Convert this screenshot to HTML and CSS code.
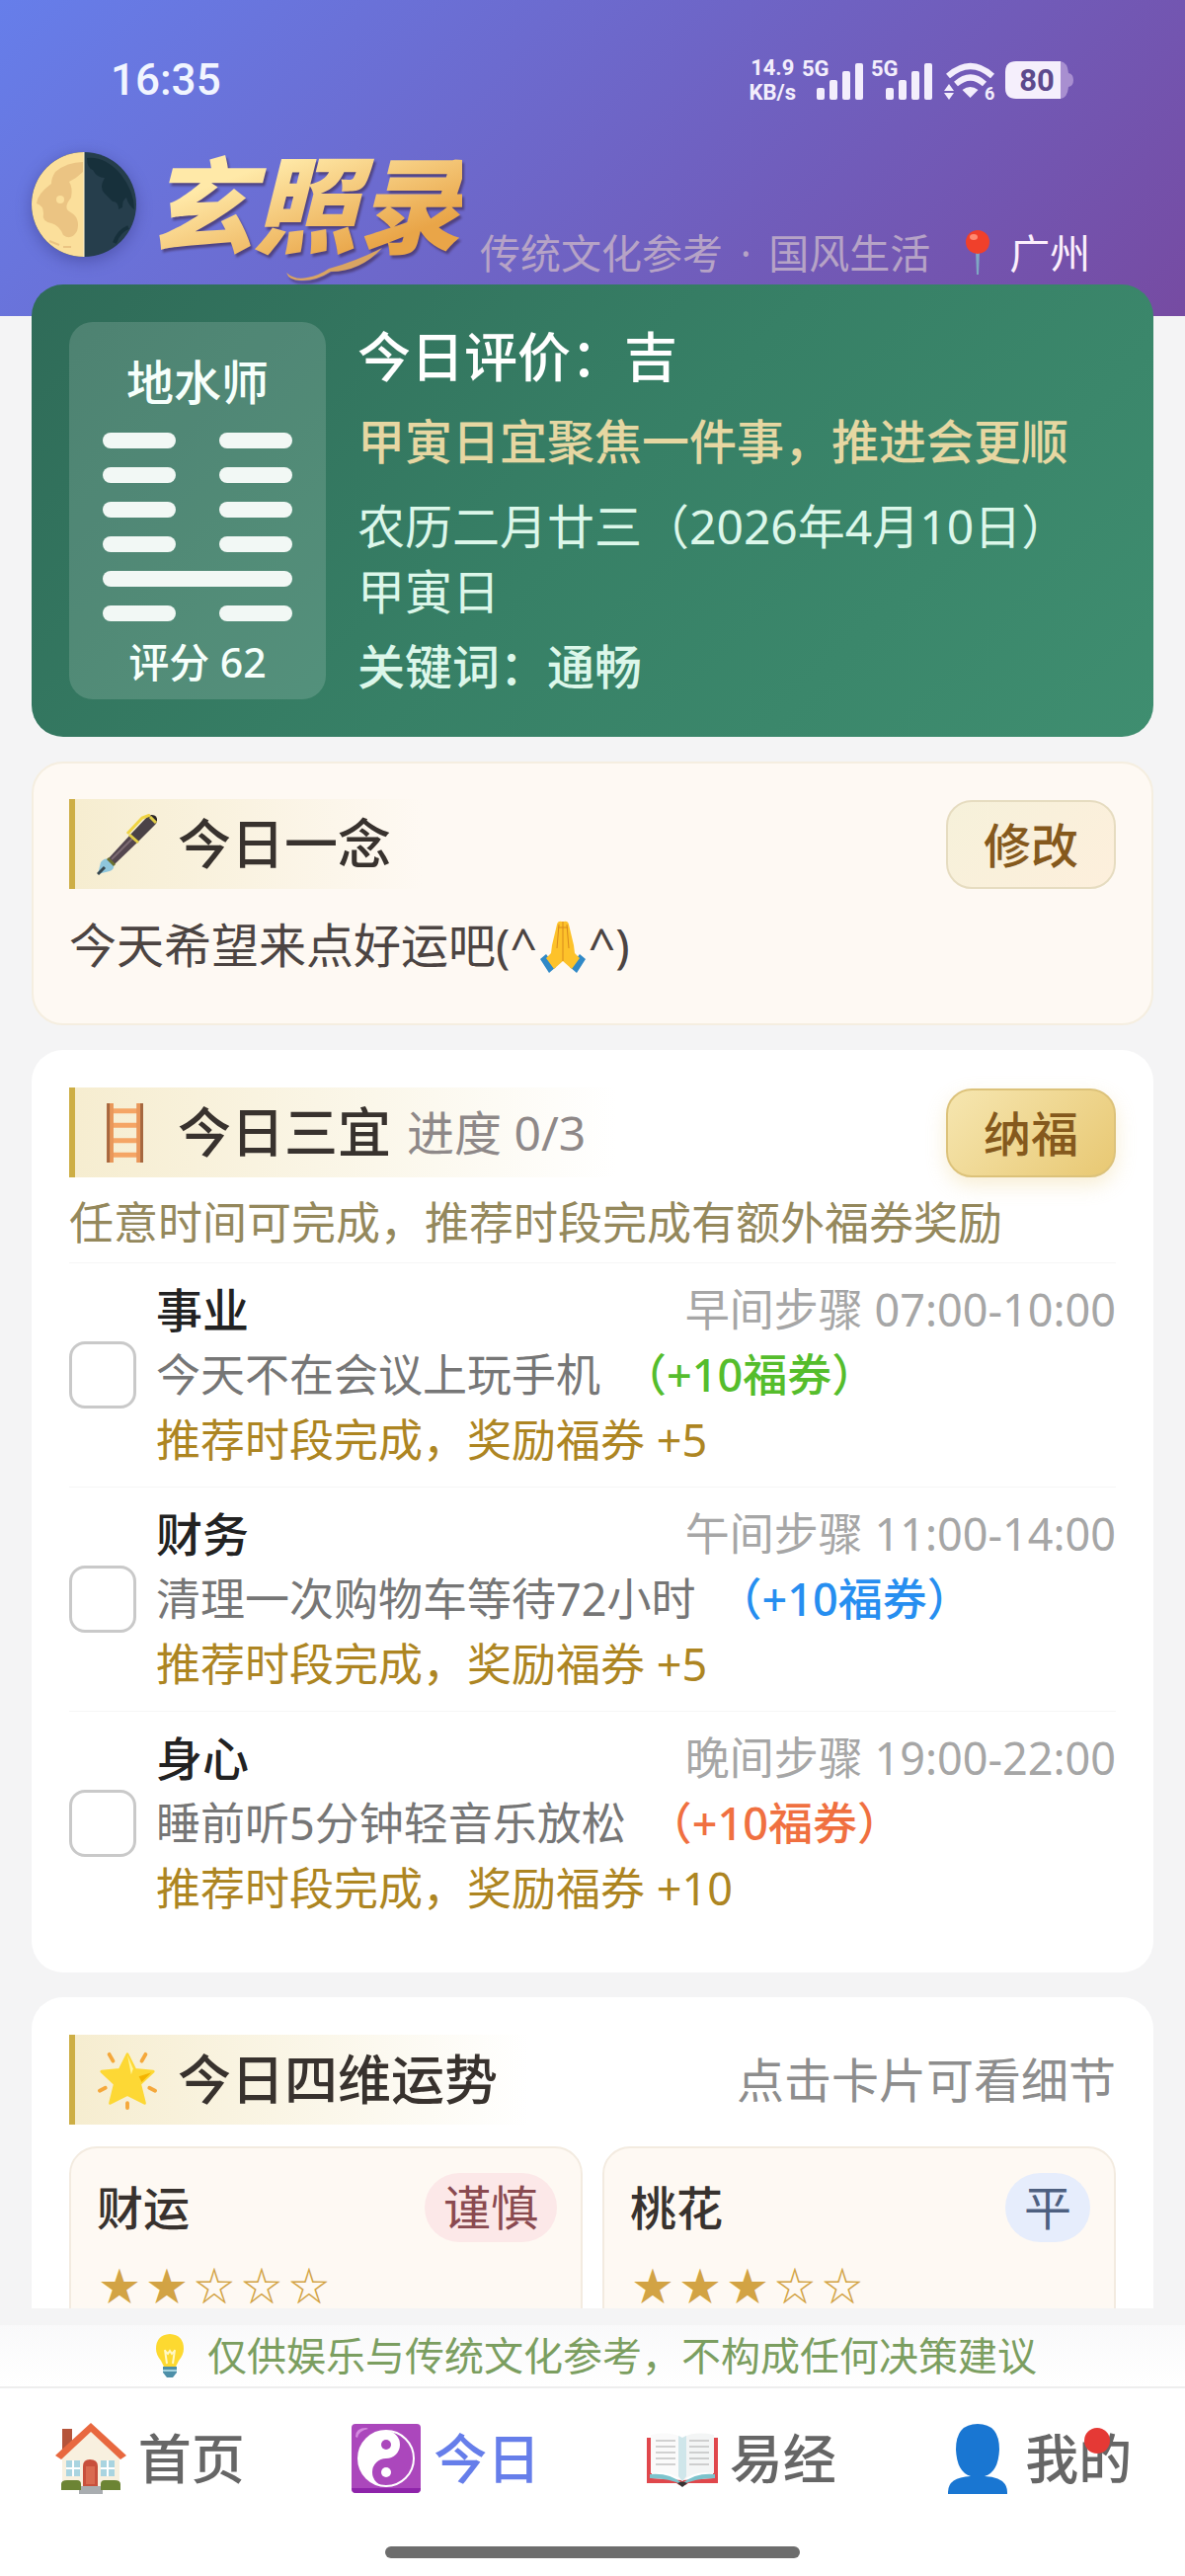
FILE: index.html
```
<!DOCTYPE html>
<html lang="zh-CN">
<head>
  <meta charset="UTF-8">
  <meta name="viewport" content="width=device-width, initial-scale=1.0">
  <title>玄照录</title>
  <link rel="stylesheet" href="styles.css">
</head>
<body>
  <div class="page">
    <header class="header">
      <div class="status-bar">
        <span class="time">16:35</span>
        <div class="status-icons">
          <span class="speed">14.9<br>KB/s</span>
          <svg class="signal" viewBox="-4 -6 70 54" fill="#f3eefc">
            <text x="0" y="17">5G</text>
            <rect x="15" y="29" width="8" height="12" rx="2"/>
            <rect x="28" y="21" width="8" height="20" rx="2"/>
            <rect x="41" y="12" width="8" height="29" rx="2"/>
            <rect x="54" y="4" width="8" height="37" rx="2"/>
          </svg>
          <svg class="signal" viewBox="-4 -6 70 54" fill="#f3eefc">
            <text x="0" y="17">5G</text>
            <rect x="15" y="29" width="8" height="12" rx="2"/>
            <rect x="28" y="21" width="8" height="20" rx="2"/>
            <rect x="41" y="12" width="8" height="29" rx="2"/>
            <rect x="54" y="4" width="8" height="37" rx="2"/>
          </svg>
          <svg class="wifi" viewBox="-4 -6 60 54" fill="none" stroke="#f3eefc" stroke-width="6">
            <path d="M4 17 Q27 -3 49 17"/>
            <path d="M12 25 Q27 12 41 25"/>
            <path d="M26.500 39 L18.500 31 Q26.500 25 34.500 31 Z" fill="#f3eefc" stroke="none"/>
            <path d="M5 25 L10 32 H0 Z M5 41 L10 34 H0 Z" fill="#f3eefc" stroke="none"/>
            <text x="41" y="41" fill="#f3eefc" stroke="none">6</text>
          </svg>
          <svg class="battery" viewBox="0 -8 70 54">
            <path d="M54 0 H56 Q63 1 64 12 Q69 13 69 19 Q69 25 64 26 Q63 37 56 38 H54 Z" fill="#a88fd0"/>
            <path d="M11 0 H56 V38 H11 Q0 38 0 27 V11 Q0 0 11 0 Z" fill="#f5effc"/>
            <text x="32" y="30" text-anchor="middle" fill="#5d4a8c">80</text>
          </svg>
        </div>
      </div>
      <div class="brand">
        <svg class="moon" viewBox="0 0 106 106">
          <circle cx="53" cy="53" r="53" fill="#263e4c"/>
          <path d="M53 0 A53 53 0 0 0 53 106 Z" fill="#fbdf9b"/>
          <path d="M52 10 Q36 10 24 20 Q20 26 20 32 Q6 42 5 52 Q12 54 12 62 Q10 70 20 72 Q28 74 32 84 Q40 90 46 80 Q50 66 38 60 Q32 56 40 46 Q42 36 38 30 Q46 26 52 20 Z" fill="#ebc483"/>
          <circle cx="29" cy="48" r="4" fill="#fbdf9b"/>
          <path d="M18 90 L28 94 M32 96 H40" stroke="#ebc483" stroke-width="2"/>
          <path d="M56 6 Q74 4 90 22 Q104 40 104 58 Q98 54 96 46 Q92 48 92 56 L88 58 Q88 50 82 50 Q78 46 74 42 Q68 36 74 26 Q66 26 62 18 Q56 16 56 6 Z" fill="#17303b"/>
          <path d="M84 92 Q88 80 98 76" stroke="#17303b" stroke-width="4" fill="none"/>
          <path d="M53 0 V106" stroke="#fff3cf" stroke-width="1"/>
        </svg>
        <h1 class="logo">玄照录
          <svg class="swash" viewBox="0 0 100 34" aria-hidden="true">
            <path d="M1 25 Q10 33 22 30 Q34 28 44 21 Q70 14 98 0 Q76 24 46 24 Q32 33 18 33 Q4 34 1 25 Z" fill="#d9a463"/>
          </svg>
        </h1>
        <p class="slogan">传统文化参考 <span>·</span> 国风生活</p>
        <p class="city">
          <svg class="pin" viewBox="0 0 24 46">
            <path d="M10 20 H14 L13 45 H11 Z" fill="#7fa7c4"/>
            <circle cx="12" cy="12" r="12" fill="#f0402b"/>
            <ellipse cx="8" cy="7" rx="4" ry="3" fill="#ff8a70"/>
          </svg>
          广州
        </p>
      </div>
    </header>

    <main class="cards">
      <section class="summary">
        <div class="hexagram">
          <h2>地水师</h2>
          <div class="lines">
            <div class="line"><i></i><i></i></div>
            <div class="line"><i></i><i></i></div>
            <div class="line"><i></i><i></i></div>
            <div class="line"><i></i><i></i></div>
            <div class="line"><i></i></div>
            <div class="line"><i></i><i></i></div>
          </div>
          <p>评分 62</p>
        </div>
        <div class="summary-text">
          <p class="rating">今日评价：吉</p>
          <p class="advice">甲寅日宜聚焦一件事，推进会更顺</p>
          <p class="date">农历二月廿三（2026年4月10日） <span>甲寅日</span></p>
          <p class="keyword">关键词：通畅</p>
        </div>
      </section>

      <section class="card card-warm">
        <div class="card-head">
          <h2 class="card-title">
            <svg class="emoji" viewBox="0 0 62 62">
              <path d="M1 61 L4 49 Q8 44 11 46 L17 52 Q18 56 13 58 Z" fill="#8fc6dc"/>
              <path d="M1 61 L8 54" stroke="#37474f" stroke-width="3"/>
              <path d="M11 46 L34 21 L42 28 L17 52 Z" fill="#54464f"/>
              <path d="M15 46 L37 24" stroke="#7d6b74" stroke-width="2"/>
              <path d="M34 21 L51 3 Q56 0 60 4 Q62 8 59 11 L42 28 Z" fill="#4a4247"/>
              <path d="M54 1 Q62 0 61 8 Z" fill="#2b2527"/>
              <path d="M11 45 L18 52" stroke="#6b7030" stroke-width="3"/>
              <path d="M33 21 L42 29" stroke="#e3cf46" stroke-width="3"/>
              <path d="M54 3 L60 9" stroke="#e3cf46" stroke-width="3"/>
              <path d="M31 20 L46 4 L54 1" stroke="#f0d443" stroke-width="3" fill="none"/>
            </svg>
            今日一念
          </h2>
          <button type="button" class="btn">修改</button>
        </div>
        <p class="wish">今天希望来点好运吧(^<svg class="hands" viewBox="0 0 46 54">
            <path d="M0 39 L6 34 L16 47 L9 53 Z M46 39 L40 34 L30 47 L37 53 Z" fill="#3089c7"/>
            <path d="M22 1 Q18 0 17 4 L12 25 L11 33 L6 38 L14 49 L23 41 L32 49 L40 38 L35 33 L34 25 L29 4 Q28 0 24 1 Z" fill="#fdc22a"/>
            <path d="M23 1 V41 M19 4 L17 28 M27 4 L29 28" stroke="#d98a1c" stroke-width="1" fill="none"/>
            <path d="M18 7 H28" stroke="#d98a1c" stroke-width="1"/>
          </svg>^)</p>
      </section>

      <section class="card">
        <div class="card-head">
          <h2 class="card-title">
            <svg class="emoji" viewBox="0 0 64 64">
              <path d="M16 9 H44 M16 24 H44 M16 40 H44 M16 55 H44" stroke="#f5a565" stroke-width="5"/>
              <path d="M14 1 V63 M45 1 V63" stroke="#e9975a" stroke-width="7"/>
              <path d="M12 1 V63 M47 1 V63" stroke="#a5673f" stroke-width="3"/>
            </svg>
            今日三宜
            <span class="progress">进度 0/3</span>
          </h2>
          <button type="button" class="btn btn-gold">纳福</button>
        </div>
        <p class="hint">任意时间可完成，推荐时段完成有额外福券奖励</p>
        <ul class="tasks">
          <li class="task">
            <input type="checkbox" id="task-career">
            <div class="task-body">
              <div class="task-top"><label for="task-career">事业</label><span class="task-time">早间步骤 07:00-10:00</span></div>
              <p class="task-desc">今天不在会议上玩手机<b class="green">（+10福券）</b></p>
              <p class="task-bonus">推荐时段完成，奖励福券 +5</p>
            </div>
          </li>
          <li class="task">
            <input type="checkbox" id="task-money">
            <div class="task-body">
              <div class="task-top"><label for="task-money">财务</label><span class="task-time">午间步骤 11:00-14:00</span></div>
              <p class="task-desc">清理一次购物车等待72小时<b class="blue">（+10福券）</b></p>
              <p class="task-bonus">推荐时段完成，奖励福券 +5</p>
            </div>
          </li>
          <li class="task">
            <input type="checkbox" id="task-health">
            <div class="task-body">
              <div class="task-top"><label for="task-health">身心</label><span class="task-time">晚间步骤 19:00-22:00</span></div>
              <p class="task-desc">睡前听5分钟轻音乐放松<b class="orange">（+10福券）</b></p>
              <p class="task-bonus">推荐时段完成，奖励福券 +10</p>
            </div>
          </li>
        </ul>
      </section>

      <section class="card">
        <div class="card-head">
          <h2 class="card-title">
            <svg class="emoji" viewBox="0 0 64 64">
              <path d="M32 5 L40 21 L59 23 L45 36 L50 56 L32 47 L14 56 L19 36 L5 23 L24 21 Z" fill="#fdd835" stroke="#fdd835" stroke-width="3" stroke-linejoin="round"/>
              <path d="M32 6 L38 20 L36 26 Z" fill="#fff59d"/>
              <path d="M57 24 L44 28 L47 34 Z" fill="#f4b400"/>
              <path d="M13 5 L17 12 M51 5 L47 12 M3 43 L9 40 M61 43 L55 40 M32 56 V61" stroke="#f5a83b" stroke-width="4" stroke-linecap="round"/>
            </svg>
            今日四维运势
          </h2>
          <span class="card-note">点击卡片可看细节</span>
        </div>
        <div class="fortunes">
          <article class="fortune">
            <div class="fortune-top"><h3>财运</h3><span class="tag tag-red">谨慎</span></div>
            <div class="stars"><span>★</span><span>★</span><span>☆</span><span>☆</span><span>☆</span></div>
          </article>
          <article class="fortune">
            <div class="fortune-top"><h3>桃花</h3><span class="tag tag-blue">平</span></div>
            <div class="stars"><span>★</span><span>★</span><span>★</span><span>☆</span><span>☆</span></div>
          </article>
        </div>
      </section>
    </main>
  </div>

  <footer class="footer">
    <p class="disclaimer">
      <svg class="bulb" viewBox="0 0 28 44">
        <path d="M14 0 Q28 1 28 15 Q28 21 23 27 Q21 31 20 33 H8 Q7 31 5 27 Q0 21 0 15 Q0 1 14 0 Z" fill="#fdd930"/>
        <path d="M9 16 L11 30 M19 16 L17 30 M9 17 L12 20 L14 17 L16 20 L19 17" stroke="#fff8c4" stroke-width="2" fill="none"/>
        <path d="M7 33 H21 V39 L17 44 H11 L7 39 Z" fill="#4d8fa8"/>
        <path d="M7 37 H21" stroke="#a6d3e0" stroke-width="2"/>
      </svg>
      仅供娱乐与传统文化参考，不构成任何决策建议
    </p>
    <nav class="tabbar">
      <a href="#home" class="tab">
        <svg viewBox="0 0 72 72">
          <path d="M7 6 H17 V30 H7 Z" fill="#b5543a"/>
          <path d="M36 4 L65 32 V66 H7 V32 Z" fill="#f8f0df"/>
          <path d="M36 0 L72 33 L66 37 L36 9 L6 37 L0 33 Z" fill="#e8683f"/>
          <path d="M28 66 V44 Q28 37 35 37 Q43 37 43 44 V66 Z" fill="#c8503c"/>
          <path d="M31 44 H40 V62 H31 Z" fill="#d96a50"/>
          <path d="M11 38 H25 V54 H11 Z M46 38 H60 V54 H46 Z" fill="#a9d4e0"/>
          <path d="M18 38 V54 M11 46 H25 M53 38 V54 M46 46 H60" stroke="#fff" stroke-width="2"/>
          <path d="M6 68 V62 Q6 58 12 58 H22 Q26 58 26 62 V68 Z M46 68 V62 Q46 58 50 58 H60 Q66 58 66 62 V68 Z" fill="#6c8434"/>
          <path d="M26 64 H46 V68 H48 V72 H24 V68 H26 Z" fill="#a9adb0"/>
        </svg>
        首页
      </a>
      <a href="#today" class="tab active">
        <svg viewBox="0 0 72 72">
          <rect x="1" y="1" width="70" height="70" rx="4" fill="#ab47bc"/>
          <path d="M1 66 Q1 71 6 71 H66 Q71 71 71 66 Z" fill="#8e24aa"/>
          <path d="M5 14 Q5 5 16 5 L18 6 Q8 8 7 15 Z" fill="#d58be0"/>
          <circle cx="36" cy="36" r="28" fill="#ab47bc" stroke="#fff" stroke-width="2"/>
          <path d="M36 8 A28 28 0 0 0 36 64 A14 14 0 0 1 36 36 A14 14 0 0 0 36 8 Z" fill="#fff"/>
          <circle cx="36" cy="22" r="5" fill="#ab47bc"/>
          <circle cx="36" cy="50" r="5" fill="#fff"/>
        </svg>
        今日
      </a>
      <a href="#yijing" class="tab">
        <svg viewBox="0 0 72 72">
          <path d="M0 15 H5 V56 L36 58 L67 56 V15 H72 V61 H42 Q36 66 30 61 H0 Z" fill="#e0474c"/>
          <path d="M3 52 Q22 50 36 61 Q50 50 69 52 V56 Q48 56 36 63 Q24 56 3 56 Z" fill="#7cc3cc"/>
          <path d="M4 12 Q24 8 36 15 V59 Q24 48 4 51 Z" fill="#fafafa"/>
          <path d="M68 12 Q48 8 36 15 V59 Q48 48 68 51 Z" fill="#f3f5f5"/>
          <path d="M32 13 L36 15 L40 13 V54 L36 59 L32 54 Z" fill="#cfe6ea"/>
          <path d="M9 18 H29 M9 24 H29 M9 30 H29 M9 36 H29 M9 42 H29 M43 18 H63 M43 24 H63 M43 30 H63 M43 36 H63 M43 42 H63" stroke="#a8a8a8" stroke-width="1"/>
          <path d="M31 61 Q36 58 41 61 L36 65 Z" fill="#333"/>
        </svg>
        易经
      </a>
      <a href="#mine" class="tab">
        <svg viewBox="0 0 72 72">
          <path d="M36 1 Q58 1 58 27 Q57 50 43 54 Q66 55 66 70 V72 H6 V70 Q6 55 29 54 Q15 50 14 27 Q14 1 36 1 Z" fill="#1976d2"/>
        </svg>
        我的
        <span class="dot"></span>
      </a>
    </nav>
    <div class="home-indicator"></div>
  </footer>
</body>
</html>
```
FILE: styles.css
```
* {
  box-sizing: border-box;
}
body {
  font-family: "Noto Sans", "Noto Sans CJK SC", sans-serif;
  font-size: 48px;
  line-height: 66px;
  margin: 0;
  height: 100vh;
  display: flex;
  flex-direction: column;
  background-color: #f4f4f5;
  color: #38322e;
}
h1, h2, h3, p, ul {
  margin: 0;
  padding: 0;
}
svg {
  display: block;
  flex-shrink: 0;
}
.page {
  flex: 1;
  min-height: 0;
  overflow: hidden;
}

/* header */
.header {
  background: linear-gradient(135deg, #667eea 0%, #764ba2 100%);
  padding: 56px 32px 32px;
}
.status-bar {
  display: flex;
  justify-content: space-between;
  align-items: center;
  height: 50px;
  margin-bottom: 20px;
  padding: 0 80px;
}
.time {
  font-family: Roboto, sans-serif;
  font-size: 44px;
  font-weight: 500;
  line-height: 54px;
  color: #f1f5ff;
}
.status-icons {
  display: flex;
  align-items: center;
}
.speed {
  margin-right: 2px;
  font-family: Roboto, sans-serif;
  font-size: 22px;
  font-weight: 700;
  line-height: 25px;
  text-align: center;
  color: #f3eefc;
}
.signal {
  width: 70px;
  height: 54px;
}
.signal text {
  font: 700 22px Roboto, sans-serif;
}
.wifi {
  width: 60px;
  height: 54px;
  margin: 0 6px 0 4px;
}
.wifi text {
  font: 700 18px Roboto, sans-serif;
}
.battery {
  width: 70px;
  height: 54px;
}
.battery text {
  font: 700 31px Roboto, sans-serif;
}
.brand {
  display: flex;
  align-items: center;
  height: 162px;
}
.moon {
  width: 106px;
  height: 106px;
  filter: drop-shadow(0 4px 8px rgba(40, 40, 110, 0.4));
}
.logo {
  position: relative;
  margin: 0 18px 0 12px;
  font-size: 106px;
  font-weight: 900;
  font-style: italic;
  line-height: 156px;
  background: linear-gradient(160deg, #ffe9a8 30%, #e9a548 75%);
  background-clip: text;
  -webkit-background-clip: text;
  color: transparent;
  filter: drop-shadow(2px 3px 1px rgba(60, 40, 80, 0.6));
}
.swash {
  position: absolute;
  left: 139px;
  bottom: 0;
  width: 100px;
  height: 34px;
}
.slogan, .city {
  align-self: flex-end;
  font-size: 41px;
  line-height: 64px;
  white-space: nowrap;
}
.slogan {
  color: #b6a3c6;
}
.slogan span {
  margin: 0 7px;
}
.city {
  display: flex;
  align-items: center;
  gap: 20px;
  margin-left: 36px;
  color: #fbeefc;
}
.pin {
  width: 24px;
  height: 46px;
}

/* summary */
.cards {
  display: flex;
  flex-direction: column;
  gap: 25px;
  margin-top: -32px;
  padding: 0 32px;
}
.summary {
  display: flex;
  gap: 32px;
  padding: 38px;
  border-radius: 32px;
  background: linear-gradient(135deg, #2f6b58 0%, #378066 50%, #3f8e70 100%);
}
.hexagram {
  display: flex;
  flex-direction: column;
  align-items: center;
  width: 260px;
  padding: 28px 0 4px;
  border-radius: 24px;
  background-color: rgba(255, 255, 255, 0.15);
  color: #f6fffb;
}
.hexagram h2 {
  font-size: 48px;
  font-weight: 500;
}
.hexagram p {
  font-size: 41px;
  font-weight: 500;
  margin-top: 8px;
}
.lines {
  display: flex;
  flex-direction: column;
  gap: 19px;
  width: 192px;
  margin-top: 18px;
}
.line {
  display: flex;
  gap: 44px;
}
.line i {
  flex: 1;
  height: 16px;
  border-radius: 8px;
  background-color: #f2f8f5;
}
.summary-text {
  flex: 1;
  color: #dcf7ea;
}
.rating {
  font-size: 54px;
  font-weight: 500;
  line-height: 70px;
  color: #fff;
}
.advice {
  margin-top: 18px;
  font-weight: 500;
  color: #e6d7a2;
}
.date {
  margin-top: 20px;
}
.date span {
  display: inline-block;
}
.keyword {
  margin-top: 10px;
  font-weight: 500;
}

/* cards */
.card {
  padding: 38px;
  border-radius: 32px;
  background-color: #fff;
}
.card-warm {
  border: 2px solid #f5eee0;
  padding: 36px;
  background-color: #fef9f3;
}
.card-head {
  display: flex;
  justify-content: space-between;
  align-items: center;
}
.card-title {
  display: flex;
  align-items: center;
  gap: 20px;
  padding: 0 32px 0 22px;
  border-left: 6px solid #cdae45;
  background: linear-gradient(90deg, #f6edd0, rgba(255, 248, 235, 0));
  font-size: 54px;
  font-weight: 500;
  line-height: 91px;
}
.emoji {
  width: 62px;
  height: 62px;
}
.progress {
  margin-left: -4px;
  font-size: 48px;
  font-weight: 400;
  color: #8e8888;
}
.btn {
  width: 172px;
  height: 90px;
  padding: 0 0 4px;
  border: 2px solid #e6dcc0;
  border-radius: 26px;
  background: linear-gradient(135deg, #f6f1da, #fdefdc);
  font-family: inherit;
  font-size: 48px;
  font-weight: 500;
  color: #85591d;
}
.btn-gold {
  border-color: #dcc27a;
  background: linear-gradient(135deg, #f6e6b0, #e8c873);
  box-shadow: 0 8px 20px rgba(232, 200, 115, 0.3);
}
.wish {
  display: flex;
  align-items: center;
  margin: 24px 0 10px;
  color: #4c4442;
}
.hands {
  width: 46px;
  height: 54px;
  margin: 4px 3px 0;
}
.hint {
  margin: 13px 0 7px;
  font-size: 45px;
  color: #94885c;
}

/* tasks */
.tasks {
  list-style: none;
}
.task {
  display: flex;
  align-items: center;
  gap: 20px;
  padding: 14px 0;
  border-top: 1px solid #f6f6f6;
  font-size: 45px;
}
.task input {
  appearance: none;
  flex-shrink: 0;
  width: 68px;
  height: 68px;
  margin: 0;
  border: 3px solid #c9c9c9;
  border-radius: 16px;
  background-color: #fff;
}
.task-body {
  flex: 1;
}
.task-top {
  display: flex;
  justify-content: space-between;
}
.task-top label {
  font-size: 47px;
  font-weight: 500;
  color: #222;
}
.task-time {
  color: #a6a6a6;
}
.task-desc {
  color: #767676;
}
.task-desc b {
  margin-left: 22px;
  font-weight: 500;
}
.task-bonus {
  color: #ad8522;
}
.green {
  color: #55bd2c;
}
.blue {
  color: #268ef0;
}
.orange {
  color: #f07040;
}

/* fortunes */
.card-note {
  color: #8d8d8d;
}
.fortunes {
  display: grid;
  grid-template-columns: 1fr 1fr;
  gap: 20px;
  margin-top: 22px;
}
.fortune {
  min-height: 240px;
  padding: 25px 24px 25px 26px;
  border: 2px solid #f3ebe0;
  border-radius: 28px;
  background-color: #fef9f3;
}
.fortune-top {
  display: flex;
  justify-content: space-between;
  align-items: center;
}
.fortune h3 {
  font-size: 47px;
  font-weight: 500;
}
.tag {
  padding: 0 19px;
  border-radius: 36px;
  line-height: 70px;
}
.tag-red {
  background-color: #fce8e8;
  color: #8a4a50;
}
.tag-blue {
  background-color: #e6edfc;
  color: #4e6080;
}
.stars {
  display: flex;
  gap: 8px;
  margin-top: 17px;
  padding-left: 3px;
  font-size: 40px;
  line-height: 54px;
  color: #d2a344;
}
.stars span {
  width: 40px;
}

/* footer */
.footer {
  margin-top: 17px;
  background-color: #fff;
}
.disclaimer {
  display: flex;
  justify-content: center;
  align-items: center;
  gap: 24px;
  padding-left: 8px;
  border-bottom: 2px solid #eee;
  background: linear-gradient(#f9f9fa, #fff);
  font-size: 40px;
  line-height: 62px;
  color: #7b9e60;
}
.bulb {
  width: 28px;
  height: 44px;
}
.tabbar {
  display: flex;
  padding: 34px 0 52px 2px;
}
.tab {
  position: relative;
  flex: 1;
  display: flex;
  justify-content: center;
  align-items: center;
  gap: 12px;
  font-size: 54px;
  font-weight: 500;
  line-height: 74px;
  text-decoration: none;
  color: #666;
}
.tab svg {
  width: 72px;
  height: 72px;
}
.tab.active {
  color: #667eea;
}
.dot {
  position: absolute;
  top: 6px;
  left: 66%;
  width: 26px;
  height: 26px;
  border-radius: 50%;
  background-color: #e53935;
}
.home-indicator {
  width: 35%;
  height: 12px;
  margin: 0 auto 18px;
  border-radius: 6px;
  background-color: #6d6d6d;
}
```
